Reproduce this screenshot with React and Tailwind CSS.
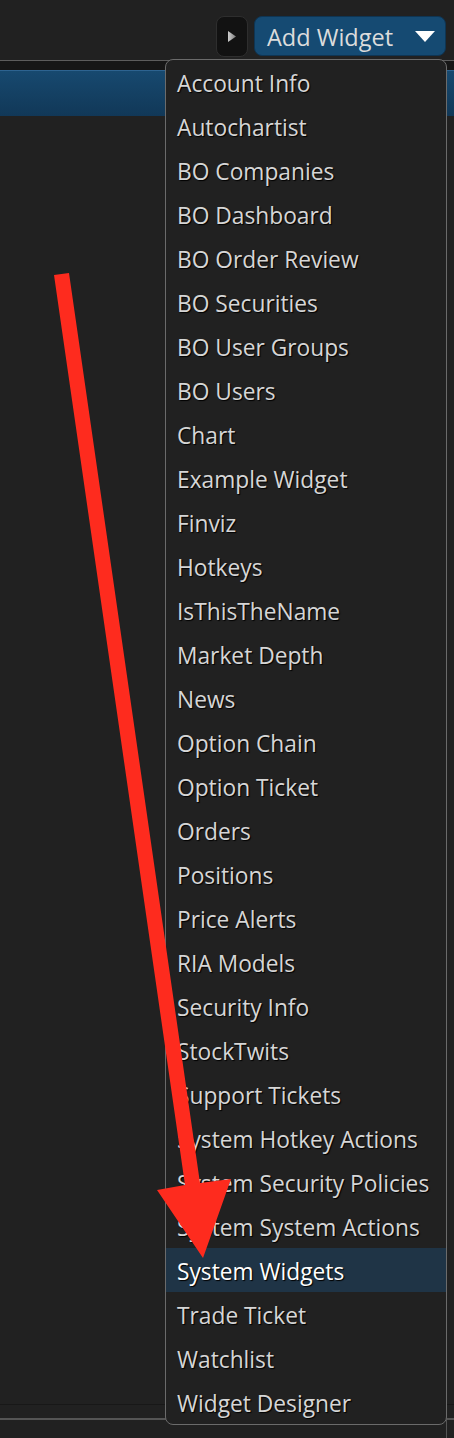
const widgets = [
  'Account Info',
  'Autochartist',
  'BO Companies',
  'BO Dashboard',
  'BO Order Review',
  'BO Securities',
  'BO User Groups',
  'BO Users',
  'Chart',
  'Example Widget',
  'Finviz',
  'Hotkeys',
  'IsThisTheName',
  'Market Depth',
  'News',
  'Option Chain',
  'Option Ticket',
  'Orders',
  'Positions',
  'Price Alerts',
  'RIA Models',
  'Security Info',
  'StockTwits',
  'Support Tickets',
  'System Hotkey Actions',
  'System Security Policies',
  'System System Actions',
  'System Widgets',
  'Trade Ticket',
  'Watchlist',
  'Widget Designer',
];

const Header = () => (
  <div className="h-[60px] flex justify-end items-start pt-[16px] pr-[8px] gap-[6px]">
    <button className="w-[32px] h-[41px] rounded-[8px] bg-[#121212] border border-[#2e2e2e] flex items-center justify-center">
      <svg width="8" height="11" viewBox="0 0 8 11">
        <defs>
          <linearGradient id="tri" x1="0" y1="0" x2="1" y2="0">
            <stop offset="0" stopColor="#cfcfcf" />
            <stop offset="1" stopColor="#7a7a7a" />
          </linearGradient>
        </defs>
        <path d="M0 0 L8 5.5 L0 11 Z" fill="url(#tri)" />
      </svg>
    </button>
    <button className="w-[192px] h-[40px] rounded-[8px] bg-[#154a72] border border-[#0f3553] flex items-center justify-between pl-[12px] pr-[10px] text-[23.5px] text-[#dcdcdc]">
      <span className="leading-none mt-[3px]">Add Widget</span>
      <svg width="20" height="11" viewBox="0 0 20 11" className="mt-[1px]">
        <path d="M0 0 H20 L10 11 Z" fill="#ffffff" />
      </svg>
    </button>
  </div>
);

const Panel = () => (
  <div className="border-t border-[#5c5c5c] border-b-2 border-b-[#555]">
    <div className="h-[9px] bg-[#161616]" />
    <div className="h-[46px] bg-gradient-to-b from-[#17496f] to-[#113858] border-t border-[#2d6390]" />
    <div className="h-[1288px]" />
    <div className="h-[1px] bg-[#181818]" />
    <div className="h-[13px]" />
  </div>
);

const Menu = () => (
  <div className="absolute left-[165px] top-[59px] w-[282px] rounded-[8px] border border-[#6b6b6b] bg-[#212121] overflow-hidden">
    {widgets.map((name) => {
      const active = name === 'System Widgets';
      return (
        <div
          key={name}
          className={
            active
              ? 'h-[44px] flex items-center pl-[11px] pt-[4px] bg-[#1f3446] text-white'
              : 'h-[44px] flex items-center pl-[11px] pt-[4px] text-[#d6d6d6]'
          }
        >
          <span className="text-[22.75px] leading-none whitespace-nowrap [text-shadow:1px_1px_1px_#000]">
            {name}
          </span>
        </div>
      );
    })}
  </div>
);

const Arrow = () => (
  <svg
    className="absolute left-0 top-0 pointer-events-none"
    width="454"
    height="1438"
    viewBox="0 0 454 1438"
  >
    <polygon
      points="54,275 69,273 200,1183 231,1179 203,1258 157,1190 185,1185"
      fill="#fe2b1e"
    />
  </svg>
);

export default function App() {
  return (
    <div
      className="relative w-[454px] h-[1438px] overflow-hidden bg-[#212121]"
      style={{ fontFamily: '"Open Sans", "Liberation Sans", sans-serif' }}
    >
      <Header />
      <Panel />
      <div className="absolute left-[446px] top-[1400px] w-[1px] h-[38px] bg-[#555]" />
      <Menu />
      <Arrow />
    </div>
  );
}
